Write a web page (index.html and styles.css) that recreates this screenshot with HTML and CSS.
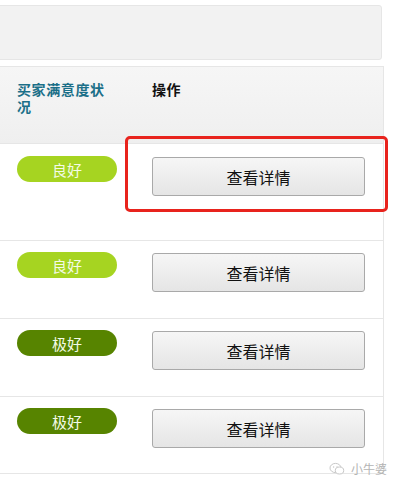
FILE: index.html
```html
<!DOCTYPE html>
<html lang="zh">
<head>
<meta charset="utf-8">
<link rel="stylesheet" href="styles.css">
</head>
<body>
<div class="page">
  <div class="panel"></div>
  <div class="table">
    <div class="thead">
      <div class="th th-status">买家满意度状况</div>
      <div class="th th-op">操作</div>
    </div>
    <div class="row row-first">
      <div class="cell-status"><span class="badge good">良好</span></div>
      <div class="cell-op"><button class="btn">查看详情</button></div>
    </div>
    <div class="row">
      <div class="cell-status"><span class="badge good">良好</span></div>
      <div class="cell-op"><button class="btn">查看详情</button></div>
    </div>
    <div class="row">
      <div class="cell-status"><span class="badge great">极好</span></div>
      <div class="cell-op"><button class="btn">查看详情</button></div>
    </div>
    <div class="row">
      <div class="cell-status"><span class="badge great">极好</span></div>
      <div class="cell-op"><button class="btn">查看详情</button></div>
    </div>
  </div>
  <div class="highlight"></div>
  <div class="watermark">
    <svg class="wm-icon" width="16" height="14" viewBox="0 0 16 14">
      <ellipse cx="6.5" cy="6" rx="5.5" ry="4.6" fill="none" stroke="#c8c8c8" stroke-width="1"/>
      <ellipse cx="10.5" cy="8.5" rx="4.2" ry="3.5" fill="#fff" stroke="#c8c8c8" stroke-width="1"/>
      <circle cx="4.6" cy="5" r="0.7" fill="#c8c8c8"/>
      <circle cx="8" cy="5" r="0.7" fill="#c8c8c8"/>
    </svg>
    <span class="wm-text">小牛婆</span>
  </div>
</div>
</body>
</html>
```

FILE: styles.css
```css
html, body {
  margin: 0;
  padding: 0;
  background: #ffffff;
}
body {
  font-family: "Noto Sans CJK SC", "Liberation Sans", sans-serif;
  width: 395px;
  height: 487px;
  overflow: hidden;
}
.page {
  position: relative;
  width: 395px;
  height: 487px;
  padding-top: 5px;
  box-sizing: border-box;
}
.panel {
  margin-left: -5px;
  width: 387px;
  height: 55px;
  box-sizing: border-box;
  background: #f2f2f2;
  border: 1px solid #e6e6e6;
  border-radius: 3px;
}
.table {
  margin-top: 6px;
  margin-left: -5px;
  width: 389px;
  box-sizing: border-box;
  border-right: 1px solid #e6e6e6;
  padding-left: 5px;
}
.thead {
  display: grid;
  grid-template-columns: 152px 1fr;
  height: 77px;
  box-sizing: border-box;
  border-top: 1px solid #e6e6e6;
  margin-left: -5px;
  padding-left: 5px;
  background: linear-gradient(#f6f6f6, #efefef);
}
.th {
  font-size: 14px;
  font-weight: bold;
  line-height: 17px;
  padding-top: 14px;
  letter-spacing: 0.6px;
}
.th-status {
  color: #1b6f88;
  padding-left: 17px;
  padding-right: 38px;
}
.th-op {
  color: #111;
}
.row {
  display: grid;
  grid-template-columns: 152px 1fr;
  height: 78px;
  box-sizing: border-box;
  border-top: 1px solid #e6e6e6;
  padding-top: 11px;
  margin-left: -5px;
  padding-left: 5px;
}
.row-first {
  height: 97px;
  padding-top: 12px;
}
.row:last-child {
  border-bottom: 1px solid #e6e6e6;
}
.cell-status {
  padding-left: 17px;
}
.badge {
  display: flex;
  align-items: center;
  justify-content: center;
  width: 100px;
  height: 26px;
  border-radius: 13px;
  font-size: 15px;
  color: #f4fbe6;
}
.good {
  background: #a6d421;
}
.great {
  background: #578400;
}
.cell-op {
  padding-right: 18px;
}
.btn {
  display: block;
  width: 213px;
  height: 39px;
  margin-top: 1px;
  box-sizing: border-box;
  border: 1px solid #a9a9a9;
  border-radius: 3px;
  background: linear-gradient(#f6f6f6, #e5e5e5);
  font-family: "Noto Sans CJK SC", "Liberation Sans", sans-serif;
  font-size: 16px;
  color: #111;
  padding: 0;
}
.highlight {
  position: absolute;
  left: 125px;
  top: 136px;
  width: 263px;
  height: 76px;
  box-sizing: border-box;
  border: 3px solid #e8231d;
  border-radius: 5px;
}
.watermark {
  position: absolute;
  left: 329px;
  top: 462px;
  display: flex;
  align-items: center;
  gap: 6px;
}
.wm-text {
  font-size: 12px;
  color: #b4b4b4;
  line-height: 14px;
}
```
